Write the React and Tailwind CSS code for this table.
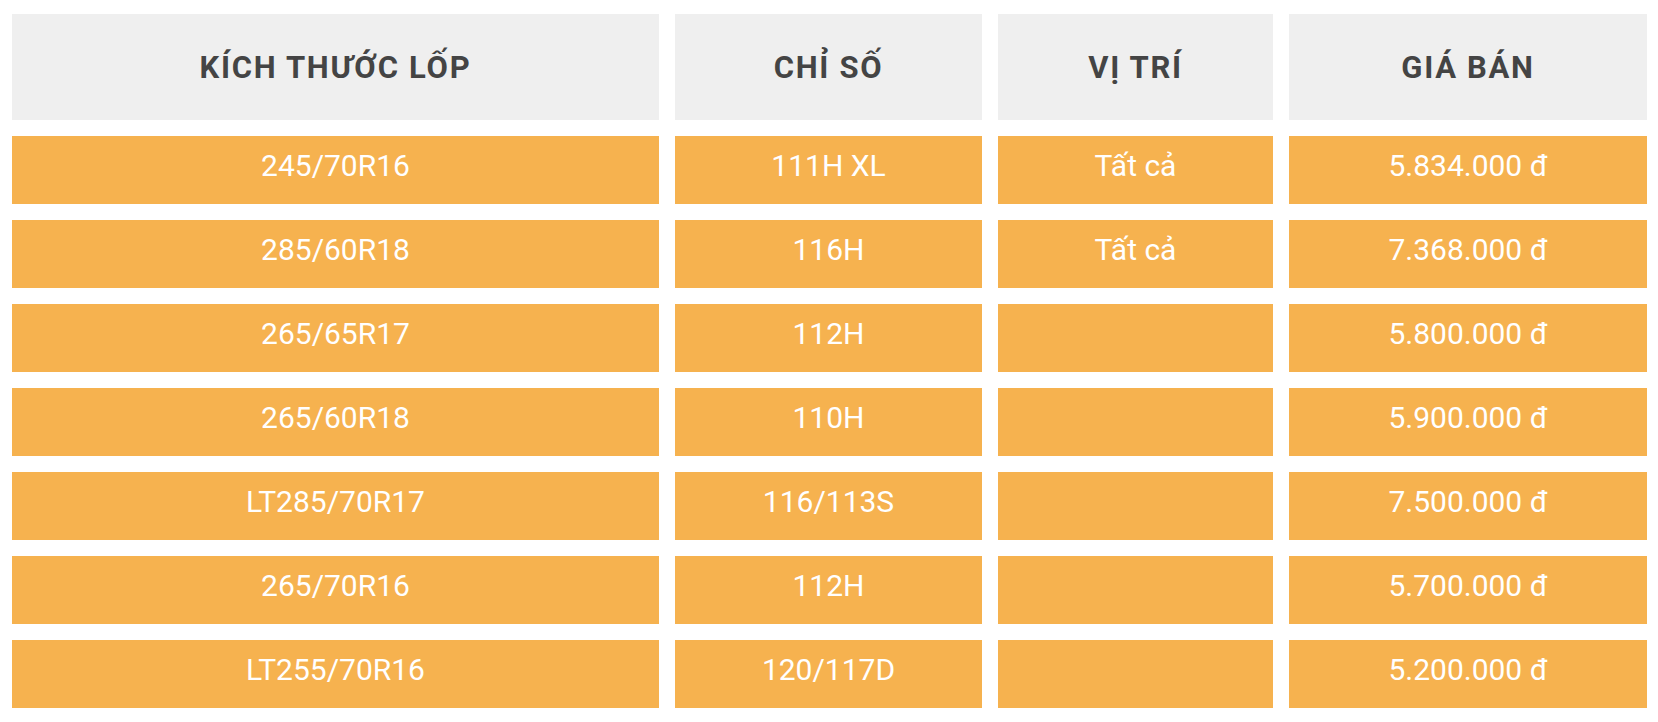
import React from "react";

const rows = [
  ["245/70R16", "111H XL", "Tất cả", "5.834.000 đ"],
  ["285/60R18", "116H", "Tất cả", "7.368.000 đ"],
  ["265/65R17", "112H", "", "5.800.000 đ"],
  ["265/60R18", "110H", "", "5.900.000 đ"],
  ["LT285/70R17", "116/113S", "", "7.500.000 đ"],
  ["265/70R16", "112H", "", "5.700.000 đ"],
  ["LT255/70R16", "120/117D", "", "5.200.000 đ"],
];

const headers = ["KÍCH THƯỚC LỐP", "CHỈ SỐ", "VỊ TRÍ", "GIÁ BÁN"];

export default function App() {
  return (
    <div
      className="w-[1658px] h-[722px] bg-white pl-[12px] pt-[14px]"
      style={{ fontFamily: "Roboto, 'Noto Sans', sans-serif" }}
    >
      <div className="grid grid-cols-[647px_307px_275px_358px] gap-x-[16px] gap-y-[16px] auto-rows-[68px] grid-rows-[106px]">
        {headers.map((h) => (
          <div
            key={h}
            className="bg-[#efefef] flex items-center justify-center text-[31px] tracking-[1.7px] font-bold text-[#444444] leading-none"
          >
            {h}
          </div>
        ))}
        {rows.map((r, i) =>
          r.map((c, j) => (
            <div
              key={i + "-" + j}
              className="bg-[#f6b24f] flex items-center justify-center pb-[9px] text-[30px] text-white leading-none"
            >
              {c}
            </div>
          ))
        )}
      </div>
    </div>
  );
}
